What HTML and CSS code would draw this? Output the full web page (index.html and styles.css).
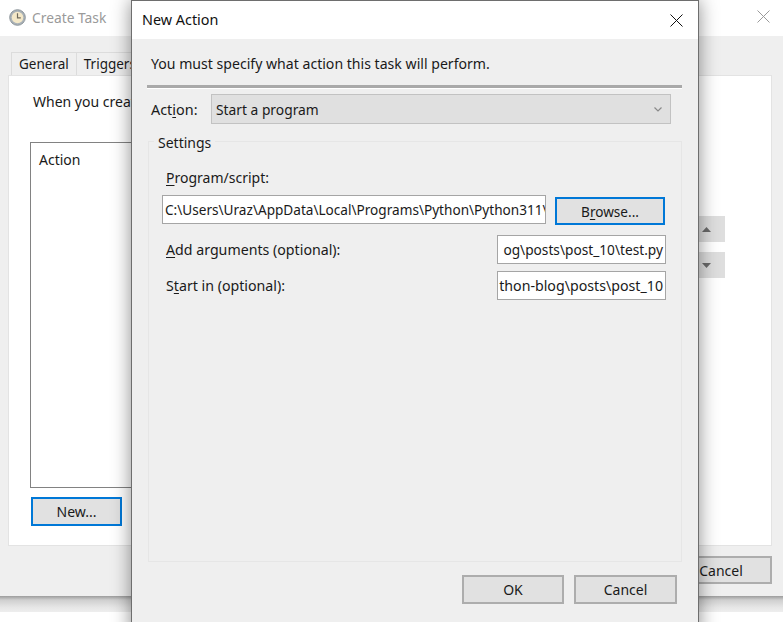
FILE: index.html
```html
<!DOCTYPE html>
<html lang="en">
<head>
<meta charset="utf-8">
<title>New Action</title>
<link rel="stylesheet" href="styles.css">
</head>
<body>
<section class="window back">
  <header class="back-title">
    <svg class="clock" width="17" height="17" viewBox="0 0 17 17">
      <circle cx="8.5" cy="8.5" r="7.8" fill="#aab2b8" stroke="#8d959a"/>
      <circle cx="8.5" cy="8.5" r="5.8" fill="#f4e8c8"/>
      <path d="M8.5 4.2v4.6h3.3" fill="none" stroke="#6f6a5c" stroke-width="1.2"/>
    </svg>
    <span class="back-name">Create Task</span>
    <svg class="close-dim" width="13" height="13" viewBox="0 0 13 13"><path d="M.5.5l12 12M12.5.5l-12 12" stroke="#9a9a9a" fill="none"/></svg>
  </header>
  <div class="back-body">
    <nav class="tabs">
      <span class="tab">General</span>
      <span class="tab">Triggers</span>
    </nav>
    <div class="panel">
      <p class="panel-text">When you create</p>
      <div class="list-row">
        <div class="list"><span class="list-head">Action</span></div>
        <div class="arrows">
          <span class="arrow"><svg width="9" height="5" viewBox="0 0 9 5"><path d="M4.5 0L9 5H0z" fill="#6a6a6a"/></svg></span>
          <span class="arrow"><svg width="9" height="5" viewBox="0 0 9 5"><path d="M0 0h9L4.5 5z" fill="#6a6a6a"/></svg></span>
        </div>
      </div>
      <div class="btn focus new-btn"><span>New...</span></div>
    </div>
    <div class="back-foot"><div class="btn back-cancel"><span>Cancel</span></div></div>
  </div>
</section>

<section class="window dialog">
  <header class="dlg-title">
    <span class="dlg-name">New Action</span>
    <svg width="13" height="13" viewBox="0 0 13 13"><path d="M.5.5l12 12M12.5.5l-12 12" stroke="#111" fill="none"/></svg>
  </header>
  <div class="dlg-body">
    <p class="intro">You must specify what action this task will perform.</p>
    <div class="sep"></div>
    <div class="action-row">
      <label class="action-label">Act<u>i</u>on:</label>
      <div class="select">
        <span>Start a program</span>
        <svg width="8" height="5" viewBox="0 0 8 5"><path d="M.5.5L4 4 7.5.5" fill="none" stroke="#8a8a8a" stroke-width="1.2"/></svg>
      </div>
    </div>
    <div class="settings">
      <span class="legend">Settings</span>
      <div class="field-label"><u>P</u>rogram/script:</div>
      <div class="program-row">
        <div class="input program">C:\Users\Uraz\AppData\Local\Programs\Python\Python311\</div>
        <div class="btn focus browse"><span>B<u>r</u>owse...</span></div>
      </div>
      <div class="arg-row first">
        <span class="arg-label"><u>A</u>dd arguments (optional):</span>
        <div class="input short args"><span>og\posts\post_10\test.py</span></div>
      </div>
      <div class="arg-row">
        <span class="arg-label">S<u>t</u>art in (optional):</span>
        <div class="input short start"><span>thon-blog\posts\post_10</span></div>
      </div>
    </div>
    <footer class="dlg-foot">
      <div class="btn ok"><span>OK</span></div>
      <div class="btn cancel"><span>Cancel</span></div>
    </footer>
  </div>
</section>
</body>
</html>
```
FILE: styles.css
```css
* { box-sizing: border-box; }
html, body { margin: 0; height: 100%; }
body {
  position: relative;
  width: 783px;
  height: 622px;
  overflow: hidden;
  background: #fff;
  font-family: "Noto Sans", "Open Sans", sans-serif;
  font-size: 14px;
  color: #1a1a1a;
}
p { margin: 0; }
u { text-underline-offset: 2px; text-decoration-thickness: 1px; }

.window { position: absolute; }

/* Back window */
.back {
  left: 0;
  top: 0;
  width: 783px;
  height: 596px;
  display: flex;
  flex-direction: column;
  background: #efefef;
}
.back::after {
  content: "";
  position: absolute;
  left: 0;
  right: 0;
  top: 100%;
  height: 16px;
  background: linear-gradient(#9c9c9c, #cfcfcf 25%, #e6e6e6 70%, #eeeeee);
}
.back-title {
  height: 36px;
  flex: none;
  background: #fff;
  display: flex;
  align-items: center;
  padding: 0 13px 1px 9px;
  gap: 6px;
}
.back-name { color: #9a9a9a; font-size: 13.8px; margin-bottom: 1px; }
.close-dim { margin-left: auto; margin-bottom: 2px; }
.clock { flex: none; }
.back-body { flex: 1; padding: 16px 11px 12px 8px; display: flex; flex-direction: column; }
.tabs { display: flex; height: 23px; padding-left: 3px; flex: none; }
.tab {
  padding: 0 7px;
  border: 1px solid #dcdcdc;
  border-bottom: 0;
  line-height: 23px;
  margin-right: -1px;
  white-space: nowrap;
  font-size: 13.5px;
}
.panel {
  height: 471px;
  background: #fff;
  border: 1px solid #e3e3e3;
  padding: 15px 21px 0;
  flex: none;
}
.panel-text { line-height: 22px; white-space: nowrap; margin-left: 3px; }
.list-row { display: flex; margin-top: 29px; height: 346px; }
.list { width: 654px; border: 1px solid #828282; padding: 7px 8px; }
.arrows { width: 38px; margin-left: 3px; padding-top: 74px; display: flex; flex-direction: column; gap: 10px; }
.arrow { height: 26px; background: #dedede; display: flex; align-items: center; justify-content: center; }
.new-btn { width: 91px; height: 29px; margin: 9px 0 0 1px; }
.back-foot { display: flex; justify-content: flex-end; margin-top: 10px; }
.back-cancel { width: 102px; height: 28px; }

/* Buttons */
.btn {
  display: flex;
  align-items: center;
  justify-content: center;
  background: #e1e1e1;
  border: 2px solid #adadad;
  flex: none;
}
.btn.focus { border-color: #0078d7; }

/* Dialog */
.dialog {
  left: 131px;
  top: 0;
  width: 568px;
  height: 640px;
  border: 1px solid #6e6e6e;
  box-shadow: 0 0 18px rgba(0, 0, 0, .45);
  background: #efefef;
  display: flex;
  flex-direction: column;
}
.dlg-title {
  height: 38px;
  flex: none;
  background: #fff;
  display: flex;
  align-items: center;
  justify-content: space-between;
  padding: 0 15px 0 10px;
  color: #111;
}
.dlg-name { font-size: 14.4px; margin-bottom: 2px; }
.dlg-body { flex: 1; padding: 14px 16px 0 15px; display: flex; flex-direction: column; }
.intro { line-height: 22px; margin-left: 4px; font-size: 14.1px; }
.sep { height: 4px; margin-top: 10px; background: linear-gradient(#a9a9a9 75%, #fff 75%); flex: none; }
.action-row { display: flex; align-items: center; margin-top: 5px; height: 30px; flex: none; }
.action-label { width: 64px; padding-left: 4px; font-size: 14.4px; }
.select {
  width: 460px;
  height: 30px;
  background: #e0e0e0;
  border: 1px solid #c2c2c2;
  display: flex;
  align-items: center;
  justify-content: space-between;
  padding: 0 8px 0 4px;
  font-size: 13.8px;
}
.settings {
  position: relative;
  margin-top: 17px;
  height: 421px;
  width: 534px;
  margin-left: 1px;
  border: 1px solid #e6e6e6;
  padding: 26px 16px 0 13px;
  flex: none;
}
.legend {
  position: absolute;
  left: 5px;
  top: -9px;
  padding: 0 4px;
  background: #efefef;
  line-height: 20px;
}
.field-label { line-height: 20px; margin-left: 4px; }
.program-row { display: flex; align-items: flex-start; margin-top: 7px; gap: 9px; }
.input {
  background: #fff;
  border: 1px solid #a5a5a5;
  height: 29px;
  line-height: 27px;
  white-space: nowrap;
  overflow: hidden;
  flex: none;
}
.program { width: 384px; padding-left: 2px; font-size: 13.6px; }
.browse { width: 110px; height: 28px; margin-top: 2px; font-size: 13.6px; }
.arg-row { display: flex; justify-content: space-between; align-items: center; margin-top: 7px; padding-left: 4px; margin-right: -1px; }
.arg-row.first { margin-top: 10px; }
.arg-label { font-size: 14.2px; }
.short { width: 169px; display: flex; justify-content: flex-end; padding-right: 2px; }
.args { font-size: 13.7px; }
.start { font-size: 14.2px; }
.dlg-foot { display: flex; justify-content: flex-end; gap: 10px; margin-top: 13px; margin-right: 5px; }
.ok { height: 29px; width: 102px; }
.cancel { height: 29px; width: 103px; }
```
